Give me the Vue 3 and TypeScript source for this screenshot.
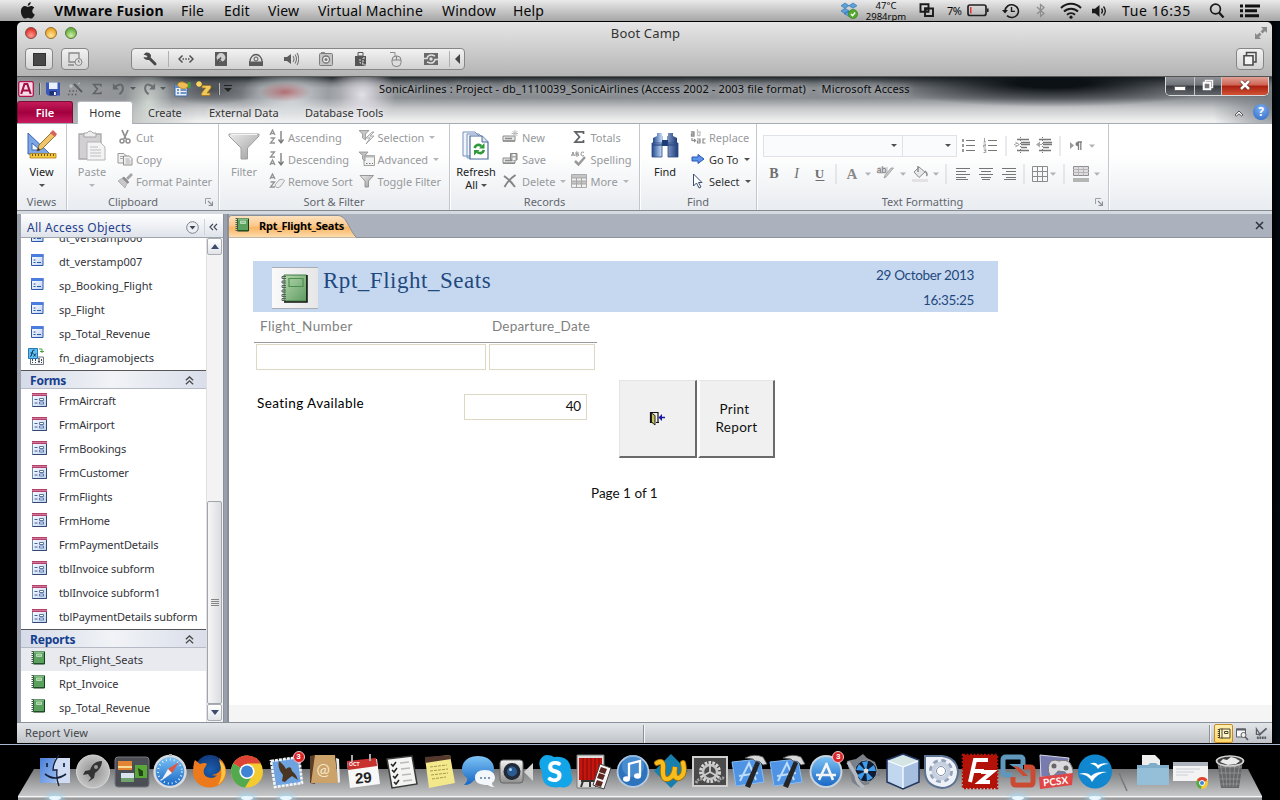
<script setup lang="ts">
interface Cell { icon: string; w: number; text?: string }
interface Entry { name: string; icon: string; active?: boolean }

const menus: string[] = ['File', 'Edit', 'View', 'Virtual Machine', 'Window', 'Help']
const devices: string[] = ['wrench', 'net', 'disk', 'cd', 'sound', 'camera', 'usb', 'mouse', 'share']
const tabs: string[] = ['Home', 'Create', 'External Data', 'Database Tools']

const functions: Entry[] = [
  { name: 'dt_verstamp006', icon: 'proc' },
  { name: 'dt_verstamp007', icon: 'proc' },
  { name: 'sp_Booking_Flight', icon: 'proc' },
  { name: 'sp_Flight', icon: 'proc' },
  { name: 'sp_Total_Revenue', icon: 'proc' },
  { name: 'fn_diagramobjects', icon: 'fn' },
]
const forms: Entry[] = [
  'FrmAircraft', 'FrmAirport', 'FrmBookings', 'FrmCustomer', 'FrmFlights', 'FrmHome',
  'FrmPaymentDetails', 'tblInvoice subform', 'tblInvoice subform1', 'tblPaymentDetails subform',
].map((name) => ({ name, icon: 'form' }))
const reports: Entry[] = [
  { name: 'Rpt_Flight_Seats', icon: 'book', active: true },
  { name: 'Rpt_Invoice', icon: 'book' },
  { name: 'sp_Total_Revenue', icon: 'book' },
]

const listCells: Cell[] = [
  { icon: 'bullets', w: 21 }, { icon: 'numbers', w: 23 }, { icon: 'sep', w: 9 },
  { icon: 'indent', w: 23 }, { icon: 'outdent', w: 22 }, { icon: 'sep', w: 9 },
  { icon: 'pilcrow', w: 24 }, { icon: 'tri', w: 8 },
]
const formatCells: Cell[] = [
  { icon: 'bold', w: 22, text: 'B' }, { icon: 'italic', w: 23, text: 'I' }, { icon: 'under', w: 23, text: 'U' }, { icon: 'sep', w: 10 },
  { icon: 'fontcolor', w: 22, text: 'A' }, { icon: 'tri', w: 9 }, { icon: 'highlight', w: 27, text: 'ab' }, { icon: 'tri', w: 7 },
  { icon: 'bucket', w: 27 }, { icon: 'tri', w: 6 }, { icon: 'sep', w: 14 },
  { icon: 'left', w: 20 }, { icon: 'center', w: 26 }, { icon: 'right', w: 20 }, { icon: 'sep', w: 10 },
  { icon: 'grid', w: 22 }, { icon: 'tri', w: 4 }, { icon: 'sep', w: 18 },
  { icon: 'altfill', w: 16 }, { icon: 'tri', w: 16 },
]

const dockApps: string[] = [
  'finder', 'rocket', 'mission', 'safari', 'firefox', 'chrome', 'mail', 'contacts', 'calendar',
  'reminders', 'stickies', 'messages', 'facetime', 'skype', 'booth', 'itunes', 'wdock', 'prefs',
  'xcode', 'xcode', 'appstore', 'fan', 'cube', 'gearapp', 'filezilla', 'vmware', 'pcsx', 'gulls',
]
const lettering: Record<string, string> = { contacts: '@', calendar: '29', skype: 'S', pcsx: 'PCSX' }
const dockRight: string[] = ['folder', 'minwin', 'trash']
const running: string[] = ['finder', 'chrome', 'mail', 'vmware', 'gulls']
</script>

<template>
  <div class="desktop">
    <svg class="defs" width="0" height="0">
      <defs>
        <linearGradient id="gBlue" x1="0" y1="0" x2="0" y2="1"><stop offset="0" stop-color="#7ec4f5" /><stop offset="1" stop-color="#1565c4" /></linearGradient>
        <linearGradient id="gGrey" x1="0" y1="0" x2="0" y2="1"><stop offset="0" stop-color="#f4f4f4" /><stop offset="1" stop-color="#8f8f8f" /></linearGradient>
        <linearGradient id="gSoft" x1="0" y1="0" x2="1" y2="1"><stop offset="0" stop-color="#ececec" /><stop offset="1" stop-color="#9a9a9a" /></linearGradient>
        <linearGradient id="gGreen" x1="0" y1="0" x2="1" y2="1"><stop offset="0" stop-color="#b4d8ac" /><stop offset="1" stop-color="#5f9a62" /></linearGradient>
        <linearGradient id="gNavy" x1="0" y1="0" x2="1" y2="0"><stop offset="0" stop-color="#23488c" /><stop offset=".35" stop-color="#b9d0f2" /><stop offset="1" stop-color="#1d3b78" /></linearGradient>
        <linearGradient id="gFinder" x1="0" y1="0" x2="1" y2="1"><stop offset="0" stop-color="#4a7fd8" /><stop offset="1" stop-color="#9cbdf0" /></linearGradient>
        <linearGradient id="gPaper" x1="0" y1="0" x2="1" y2="1"><stop offset="0" stop-color="#ffffff" /><stop offset="1" stop-color="#bdd3f2" /></linearGradient>
        <radialGradient id="gFox"><stop offset="0" stop-color="#1c5fae" /><stop offset="1" stop-color="#123a7c" /></radialGradient>
        <radialGradient id="gMetal"><stop offset="0" stop-color="#8f8f8f" /><stop offset="1" stop-color="#c4c4c4" /></radialGradient>
      </defs>

      <!-- menu bar -->
      <symbol id="apple" viewBox="0 0 16 17"><path d="M10.800 0c.2 1.800-1.300 3.700-3.100 3.800C7.500 2 9.200.2 10.800 0zM7.900 4.900c.8 0 1.700-.9 3.100-.9 1.300 0 2.600.6 3.300 1.700-3 1.700-2.400 5.800.5 6.900-.8 2-2.200 4-3.600 4-1.300 0-1.700-.8-3.200-.8s-2 .8-3.200.8C3.200 16.600.9 12.900.9 9.500c0-3.400 2.100-5.400 4.100-5.400 1.300 0 2.200.8 2.900.8z" fill="#1a1a1a" /></symbol>
      <symbol id="dropbox" viewBox="0 0 18 17"><path d="M5 1l4 2.700-4 2.600L1 3.700zM13 1l4 2.700-4 2.600-4-2.600zM5 6.300L9 9l-4 2.600L1 9zM9 9l4 2.600-4 3-5-3z" fill="#5aa2dc" stroke="#2c6ca8" stroke-width=".6" /><circle cx="13" cy="12" r="4.600" fill="#54a82a" stroke="#2f7d17" stroke-width=".6" /><path d="M11 12l1.500 1.600L15.200 10.500" fill="none" stroke="#fff" stroke-width="1.400" /></symbol>
      <symbol id="fusion" viewBox="0 0 16 15"><path d="M1.500 1.200h8v7.500h-8zM6 5.500h8v7.500H6z" fill="none" stroke="#1a1a1a" stroke-width="1.900" /><path d="M5 4.500h5L7.500 8z" fill="#1a1a1a" /></symbol>
      <symbol id="battery" viewBox="0 0 22 13"><rect x="1" y="1" width="18" height="10.500" rx="2" fill="none" stroke="#222" stroke-width="1.700" /><path d="M20 4.500h1.600v3.600H20z" fill="#222" /><path d="M3 3h1.500v6.500H3z" fill="#e2353a" /></symbol>
      <symbol id="history" viewBox="0 0 18 16"><path d="M3 8a6.700 6.400 0 1 1 2 4.700" fill="none" stroke="#1a1a1a" stroke-width="1.600" /><path d="M0 7h6L3 10.500z" fill="#1a1a1a" /><path d="M9.500 4v4.400h3.400" fill="none" stroke="#1a1a1a" stroke-width="1.400" /></symbol>
      <symbol id="blue" viewBox="0 0 9 15"><path d="M1 4l7 6.500-3.500 3V1.500L8 4.500 1 11" fill="none" stroke="#8c8c8c" stroke-width="1.200" /></symbol>
      <symbol id="wifi" viewBox="0 0 22 17"><path d="M1 6a14 14 0 0 1 20 0M4 9.500a10 10 0 0 1 14 0M7 12.700a6 6 0 0 1 8 0" fill="none" stroke="#1a1a1a" stroke-width="2" /><circle cx="11" cy="15.200" r="1.600" fill="#1a1a1a" /></symbol>
      <symbol id="vol" viewBox="0 0 16 12"><path d="M0 3.800h3L7.500 0v12L3 8.200H0z" fill="#1a1a1a" /><path d="M9.500 3.500q2 2.500 0 5M11.500 1.500q3.600 4.500 0 9" fill="none" stroke="#1a1a1a" stroke-width="1.300" /></symbol>
      <symbol id="search" viewBox="0 0 16 15"><circle cx="6.500" cy="6" r="4.900" fill="none" stroke="#1a1a1a" stroke-width="1.700" /><path d="M10 9.500l4.500 5" stroke="#1a1a1a" stroke-width="2.300" /></symbol>
      <symbol id="notes" viewBox="0 0 22 14"><path d="M1 .5h3v3H1zM1 5.300h3v3H1zM1 10.200h3v3H1zM6 .5h15v3H6zM6 5.300h12v3H6zM6 10.200h14v3H6z" fill="#111" /></symbol>

      <!-- virtual machine toolbar -->
      <symbol id="wrench" viewBox="0 0 16 16"><path d="M1.500 3.500L4 1.500q4-.5 5 3l-.3 2 5.500 5.500q1 2-1.500 2.500L7 9Q2.500 9.500 1.500 6l3 .5 1-1.500z" fill="#484848" /></symbol>
      <symbol id="net" viewBox="0 0 16 16"><path d="M4.500 4.500L1 8l3.500 3.500M11.500 4.500L15 8l-3.500 3.500" fill="none" stroke="#505050" stroke-width="1.500" /><path d="M4.500 7.300H6v1.500H4.500zM7.300 7.300h1.500v1.500H7.300zM10 7.300h1.500v1.500H10z" fill="#505050" /></symbol>
      <symbol id="disk" viewBox="0 0 16 16"><path d="M2 1h12v14H2z" fill="#5a5a5a" /><circle cx="8" cy="6.500" r="4.400" fill="#d0d0d0" /><path d="M4 12.500l4-6M5 8l4 3" stroke="#505050" stroke-width="1.400" /></symbol>
      <symbol id="cd" viewBox="0 0 16 16"><path d="M1 10h14v5H1z" fill="#5a5a5a" /><path d="M2 10.500a6 7 0 1 1 12 0" fill="#ddd" stroke="#5a5a5a" stroke-width="1.300" /><circle cx="8" cy="8" r="2" fill="none" stroke="#5a5a5a" /></symbol>
      <symbol id="sound" viewBox="0 0 16 16"><path d="M1 6h3l4-3v10l-4-3H1z" fill="#5c5c5c" /><path d="M10 5q2 3 0 6M12 3.500q3 4.500 0 9M14 2q3.500 6 0 12" fill="none" stroke="#777" stroke-width="1.100" /></symbol>
      <symbol id="camera" viewBox="0 0 16 16"><rect x="1.500" y="2.500" width="13" height="12" rx="1" fill="#c4c4c4" stroke="#7d7d7d" /><circle cx="8" cy="8.500" r="3.500" fill="#eee" stroke="#777" stroke-width="1.300" /><circle cx="8" cy="8.500" r="1.500" fill="#777" /><path d="M3 1h4v1H3z" fill="#888" /></symbol>
      <symbol id="usb" viewBox="0 0 16 16"><path d="M5 1.500h5V5H5z" fill="none" stroke="#555" /><path d="M2 5h11v10H2z" fill="#555" /><path d="M7 8v4h3M10 7h4v7h-4z" fill="none" stroke="#ddd" stroke-dasharray="2 1" /></symbol>
      <symbol id="mouse" viewBox="0 0 16 16"><path d="M2 1.500h5v4" fill="none" stroke="#8c8c8c" /><rect x="4" y="5" width="9" height="10.500" rx="4" fill="#ddd" stroke="#858585" /><path d="M4 9h9M8.500 5v4" stroke="#858585" /></symbol>
      <symbol id="share" viewBox="0 0 16 16"><path d="M1 2h14v12H1z" fill="#6a6a6a" /><path d="M1 7.500h3q1-4 5-3.500l3 1M15 8.500h-3q-1 4-5 3.500l-3-1" fill="none" stroke="#ddd" stroke-width="1.600" /><circle cx="8" cy="8" r="1.700" fill="#ddd" /></symbol>

      <!-- quick access -->
      <symbol id="acc" viewBox="0 0 16 16"><rect x=".7" y=".7" width="14.600" height="14.600" rx="1.500" fill="#f8dce6" stroke="#b0124e" stroke-width="1.300" /><path d="M3.200 13L6.500 3h2.800l3.400 10M4.800 9.500h6.400" fill="none" stroke="#a50f47" stroke-width="2.100" /></symbol>
      <symbol id="floppy" viewBox="0 0 16 16"><path d="M1 1.500h14v13H3l-2-2z" fill="#3c58b8" /><path d="M4 1.500h8.500V8H4z" fill="#e8f0fc" /><path d="M4.500 10h7v4.500h-7z" fill="#1f2f74" /><path d="M9 11h1.800v3H9z" fill="#fff" /></symbol>
      <symbol id="wand" viewBox="0 0 16 16"><path d="M7 3l8 8" stroke="#595c5f" stroke-width="2" /><path d="M2 10h8M1 13.500h9" stroke="#595c5f" stroke-width="1.500" stroke-dasharray="1.500 2" /><path d="M4 3v4M2 5h4M11 3l2-1" stroke="#c4c6c8" /></symbol>
      <symbol id="sigma" viewBox="0 0 16 16"><path d="M12.500 5V2.800H4L8.500 8 4 13.200h8.500V11" fill="none" stroke="#5f6265" stroke-width="1.700" /></symbol>
      <symbol id="undo" viewBox="0 0 16 16"><path d="M4 5q8-5 8.500 2 0 4-4 7" fill="none" stroke="#64686b" stroke-width="2.200" /><path d="M1 1.500v7h7z" fill="#64686b" /></symbol>
      <symbol id="redo" viewBox="0 0 16 16"><path d="M12 5Q4 0 3.500 7q0 4 4 7" fill="none" stroke="#6c7073" stroke-width="2.200" /><path d="M15 1.500v7H8z" fill="#6c7073" /></symbol>
      <symbol id="props" viewBox="0 0 17 16"><path d="M1 4h12v11H1z" fill="#e9f0fa" stroke="#3d6ea8" /><path d="M1 4h12v3H1z" fill="#5b90d8" /><path d="M3 9h2M6.500 9H12M3 12h2M6.500 12H12" stroke="#4a78b0" stroke-width="1.400" /><path d="M3 4q2-4 6-3l5 2v3L10 8 6 7z" fill="#f0bd55" stroke="#a87620" stroke-width=".7" /><path d="M14 1h2.500v6H14z" fill="#3ea13c" /></symbol>
      <symbol id="script" viewBox="0 0 16 16"><path d="M6 4.500h8q2 1 .5 3L11 12h3q1 1.500-1 2.500H6.500q-2-.5-.5-3L9.500 7H6z" fill="#efc95a" stroke="#a8741a" stroke-width=".8" /><path d="M3 0v6M0 3h6M1 1l4 4M5 1L1 5" stroke="#ffd75c" stroke-width="1.300" /></symbol>

      <!-- ribbon -->
      <symbol id="view" viewBox="0 0 32 32"><path d="M2 3v21h22z" fill="#7ea6e2" stroke="#3a67b8" /><path d="M6 13v7h8z" fill="#f4f8ff" stroke="#3a67b8" /><path d="M11 21l2-6L26 2l4 3-14 14z" fill="#f0c468" stroke="#7c5a22" stroke-width=".8" /><path d="M24 3l3-3 4 4-2 3z" fill="#d6645a" /><path d="M11 21l1.500-3.500L14 20z" fill="#333" /><path d="M4 23.500h26v4.500H4z" fill="#f4c838" stroke="#a9821d" stroke-width=".8" /><path d="M6 25h23" stroke="#6e5210" stroke-width="2" stroke-dasharray="1 2" /></symbol>
      <symbol id="paste" viewBox="0 0 32 32"><path d="M3 4h22v25H3z" fill="#d2d0d2" stroke="#aaa8aa" stroke-width="1.300" /><path d="M8 7V3h3q3-4 6 0h3v4z" fill="#eee" stroke="#a5a5a5" /><path d="M11 12h13l5 5v13H11z" fill="#f3f3f4" stroke="#b5b5b5" /><path d="M14 17h8M14 20h11M14 23h11M14 26h11" stroke="#bdbdc0" /></symbol>
      <symbol id="funnelbig" viewBox="0 0 32 32"><path d="M1 4h30v2L19.500 18v11H13V18L1 6z" fill="url(#gSoft)" stroke="#a0a0a0" /><path d="M3 4.500h26" stroke="#f4f4f4" /></symbol>
      <symbol id="refresh" viewBox="0 0 32 32"><path d="M3 2h12l4 4v20H3zM7 4h12l4 4v20H7z" fill="#f2f6fc" stroke="#7390ba" /><path d="M10 6h12l6 6v17H10z" fill="#fff" stroke="#4a6a9c" stroke-width="1.200" /><path d="M22 6v6h6" fill="#dbe6f5" stroke="#4a6a9c" /><path d="M14.500 18q2-5 7-2M24 20q-2 5-7 2" fill="none" stroke="#2f9a3c" stroke-width="2.600" /><path d="M24.500 13v5.500H19zM14 25.500V20h5.500z" fill="#2f9a3c" /></symbol>
      <symbol id="binoc" viewBox="0 0 32 32"><path d="M8 3h5v3h1v8H4V8l4-2zM19 3h5v3l4 2v6H18V6h1z" fill="url(#gNavy)" /><path d="M13 10h6v6h-6z" fill="#1e3b75" /><path d="M3 15h10v12H3zM19 15h10v12H19zM3 13h10v2H3zM19 13h10v2H19z" fill="url(#gNavy)" stroke="#2b4a86" stroke-width=".8" /></symbol>
      <symbol id="cut" viewBox="0 0 16 16"><path d="M5 1l4 9M11 1L7 10" stroke="#8f8f8f" stroke-width="1.800" /><circle cx="5" cy="12" r="2" fill="none" stroke="#8f8f8f" stroke-width="1.500" /><circle cx="11" cy="12" r="2" fill="none" stroke="#8f8f8f" stroke-width="1.500" /></symbol>
      <symbol id="copy" viewBox="0 0 16 16"><path d="M1 2.500h6l2 2V12H1z" fill="#f2f2f2" stroke="#999" /><path d="M6.500 5h6l2.500 2.500V14H6.500z" fill="#f2f2f2" stroke="#8e8e8e" /><path d="M8.500 8h4M8.500 10h5M8.500 12h5M3 5.500h3M3 7.500h3" stroke="#aaa" /></symbol>
      <symbol id="brush" viewBox="0 0 16 16"><path d="M1 8l6-4 4 4-3 7z" fill="#c9c7c9" stroke="#aaa" stroke-width=".8" /><path d="M6 4.500l5.500 5.500" stroke="#8a8a8a" stroke-width="2.200" /><path d="M10 6l5-5" stroke="#a5a5a5" stroke-width="2.800" /></symbol>
      <symbol id="asc" viewBox="0 0 16 16"><path d="M1 6l2.500-5L6 6M2 4.500h3M1.500 9h4L1.500 14h4.500" fill="none" stroke="#929292" stroke-width="1.300" /><path d="M12 2v11M9.500 10.500L12 14l2.500-3.500" fill="none" stroke="#777" stroke-width="1.300" /></symbol>
      <symbol id="desc" viewBox="0 0 16 16"><path d="M1.500 1h4L1.500 6h4.500M1 14l2.500-5L6 14M2 12.500h3" fill="none" stroke="#929292" stroke-width="1.300" /><path d="M12 2v11M9.500 10.500L12 14l2.500-3.500" fill="none" stroke="#777" stroke-width="1.300" /></symbol>
      <symbol id="unsort" viewBox="0 0 16 16"><path d="M1 6l2.500-5L6 6M2 4.500h3M1.500 9h4L1.500 14h4.500" fill="none" stroke="#929292" stroke-width="1.300" /><path d="M6 12l4-5q4-2 5.500 1L11 14q-4 2-5-2z" fill="#eee" stroke="#aaa" /></symbol>
      <symbol id="selfun" viewBox="0 0 16 16"><path d="M0 1.500h10L6.500 5v6l-3-2V5z" fill="#c6c6c6" stroke="#909090" stroke-width=".8" /><path d="M13 3L7 9h4l-4 6 8-8h-4l4-4z" fill="#e8e8e8" stroke="#a0a0a0" stroke-width=".9" /></symbol>
      <symbol id="advfun" viewBox="0 0 16 16"><path d="M5 4.500h10.500v10H5z" fill="#f3f3f3" stroke="#a0a0a0" /><path d="M5 4.500h10.500v2H5z" fill="#bbb" /><path d="M7 12.500h7" stroke="#777" stroke-dasharray="1.500 1.500" /><path d="M0 1h9L6 4.500V10L3.500 8V4.500z" fill="#c0c0c0" stroke="#909090" stroke-width=".8" /></symbol>
      <symbol id="funnel" viewBox="0 0 16 16"><path d="M1 2.500h13.500L9.500 8v6H6V8z" fill="url(#gSoft)" stroke="#8e8e8e" stroke-width=".9" /></symbol>
      <symbol id="new" viewBox="0 0 16 16"><path d="M1 7h12v5H1z" fill="#e4e4e4" stroke="#8d8d8d" /><path d="M3 9.500h7M1 12h12" stroke="#8d8d8d" stroke-width="1.300" /><path d="M13 1v7M9.500 4.500h6.500M10.500 2l5 5M15.500 2l-5 5" stroke="#bbb" /></symbol>
      <symbol id="save" viewBox="0 0 16 16"><path d="M1 7h12v5H1z" fill="#e4e4e4" stroke="#8d8d8d" /><path d="M3 9.500h7M1 12.300h12" stroke="#8d8d8d" stroke-width="1.300" /><path d="M8.500 2.500H15V9H8.500z" fill="#aaa" stroke="#858585" /><path d="M10.500 3h3v2h-3zM10.500 6.500h3V9h-3z" fill="#f4f4f4" /></symbol>
      <symbol id="del" viewBox="0 0 16 16"><path d="M2 3q6 4 11 11M13.500 2Q6 7 2.500 14" fill="none" stroke="#848484" stroke-width="1.900" /></symbol>
      <symbol id="spell" viewBox="0 0 16 16"><path d="M.5 5L2 1l1.500 4M1 4h2M5 1v4M5 1h1.500q2 1 0 2H5h2q1.500 1 0 2H5M13 1.500q-3-1.500-3 1.500t3 1.500" fill="none" stroke="#8a8a8a" stroke-width=".9" /><path d="M4 10l3.500 3.500L14 6" fill="none" stroke="#999" stroke-width="2.500" /></symbol>
      <symbol id="more" viewBox="0 0 16 16"><path d="M.5 1.500h15v13H.5z" fill="#f1f1f1" stroke="#aaa" /><path d="M1 2h14v3H1zM1 8h14v3H1z" fill="#c5c5c5" /><path d="M.5 5h15M.5 8h15M.5 11h15M5.500 5v9M10.500 5v9" stroke="#a5a5a5" /></symbol>
      <symbol id="replace" viewBox="0 0 16 16"><path d="M1 3h3v4H1.500V5H4" fill="none" stroke="#8c8c8c" stroke-width="1.300" /><path d="M7.500 0v6.500H10V3H7.500" fill="none" stroke="#c4c4c4" stroke-width="1.300" /><path d="M2 9v2.500h3M4 10l1.500 1.500L4 13M7 10h3v4H7.500v-2H10M15.500 10H13v4h2.500" fill="none" stroke="#8c8c8c" stroke-width="1.200" /></symbol>
      <symbol id="goto" viewBox="0 0 16 16"><path d="M2 6h6V3.500L14 8l-6 4.500V10H2z" fill="#5e93ec" stroke="#2756b4" /></symbol>
      <symbol id="pointer" viewBox="0 0 16 16"><path d="M3.500 1v12l3-3 2.500 5 2-1-2.500-4.500H12z" fill="#fff" stroke="#3b4f74" /></symbol>
      <symbol id="launch" viewBox="0 0 8 8"><path d="M.5 6V.5H6" fill="none" stroke="#9aa0a8" /><path d="M3 3l4 4M7.500 3.500v4h-4" fill="none" stroke="#8b9098" stroke-width="1.200" /></symbol>

      <!-- text formatting -->
      <symbol id="sep" viewBox="0 0 16 20"><path d="M8 0v20" stroke="#d2d5da" /></symbol>
      <symbol id="tri" viewBox="0 0 16 20"><path d="M5 8.500h6L8 11.800z" fill="#b0b3b8" /></symbol>
      <symbol id="under" viewBox="0 0 16 20"><path d="M3.500 16.500h9" stroke="#6f6f6f" /></symbol>
      <symbol id="highlight" viewBox="0 0 16 20"><path d="M0 3h10v7H0z" fill="#dcdadc" /><path d="M15.500 4L8 13l-2 1 .8-2.500L13 4z" fill="#ccc" stroke="#999" stroke-width=".8" /></symbol>
      <symbol id="bucket" viewBox="0 0 16 20"><path d="M7 3l6 5-6 5.500-5-5.500z" fill="#e8e8e8" stroke="#8e8e8e" /><path d="M6 2v6M13 7q3 3 1.500 5" stroke="#8e8e8e" fill="none" stroke-width="1.500" /><path d="M0 15h16v3H0z" fill="#e4e0e4" /></symbol>
      <symbol id="left" viewBox="0 0 16 20"><path d="M1 4.500h14M1 7.500h10M1 10.500h14M1 13.500h10M1 15.500h12" stroke="#757575" /></symbol>
      <symbol id="center" viewBox="0 0 16 20"><path d="M1 4.500h14M3 7.500h10M1 10.500h14M3 13.500h10M4 15.500h8" stroke="#757575" /></symbol>
      <symbol id="right" viewBox="0 0 16 20"><path d="M1 4.500h14M5 7.500h10M1 10.500h14M5 13.500h10M3 15.500h12" stroke="#757575" /></symbol>
      <symbol id="grid" viewBox="0 0 16 20"><path d="M.5 2.500h15v15H.5zM5.500 2.500v15M10.500 2.500v15M.5 7.500h15M.5 12.500h15" fill="none" stroke="#8b8b8b" /></symbol>
      <symbol id="altfill" viewBox="0 0 16 20"><path d="M.5 2.500h15v9H.5z" fill="#e0dde2" stroke="#8d8d8d" /><path d="M5.500 2.500v9M10.500 2.500v9M0 5.500h16M0 8.500h16" stroke="#b5b5b5" /><path d="M0 14h16v4H0z" fill="#b5b5b5" /></symbol>
      <symbol id="bullets" viewBox="0 0 16 20"><path d="M6 4.500h9M6 9.500h9M6 14.500h9" stroke="#777" /><path d="M2 3h2v3H2zM2 8h2v3H2zM2 13h2v3H2z" fill="#999" /></symbol>
      <symbol id="numbers" viewBox="0 0 16 20"><path d="M6 4.500h9M6 9.500h9M6 14.500h9" stroke="#777" /><path d="M2.500 2v4M1.500 6H4M1.500 8h2v1.500h-2V11H4M1.500 13h2.300v3.500H1.500M2 14.700h2" fill="none" stroke="#999" stroke-width=".9" /></symbol>
      <symbol id="indent" viewBox="0 0 16 20"><path d="M3 3.500h12M7 6.500h9M7 8.500h9M7 11.500h6M3 14.500h12" stroke="#777" stroke-width="1.300" /><path d="M6 8.500L1.500 5.500v6zM0 8h4v1H0z" fill="#aaa" /><path d="M6.500 1v16" stroke="#777" stroke-dasharray="1 2" /></symbol>
      <symbol id="outdent" viewBox="0 0 16 20"><path d="M3 3.500h12M7 6.500h9M7 8.500h9M7 11.500h6M3 14.500h12" stroke="#777" stroke-width="1.300" /><path d="M0 8.500L4 5.500v6zM3 8h3v1H3z" fill="#aaa" /><path d="M6.500 1v16" stroke="#777" stroke-dasharray="1 2" /></symbol>
      <symbol id="pilcrow" viewBox="0 0 16 20"><path d="M2 6l4 3.500L2 13z" fill="#999" /><path d="M14 6H9.500a2 2 0 0 0 0 4.200h1V6" fill="#808080" /><path d="M14 6H9.500M10.500 6v8M12.800 6v8" fill="none" stroke="#808080" stroke-width="1.300" /></symbol>

      <!-- navigation -->
      <symbol id="proc" viewBox="0 0 16 16"><path d="M.5 2.500h11.500v11H.5z" fill="url(#gPaper)" stroke="#2b57ac" /><path d="M0 2h12.500v3H0z" fill="#4a7ddd" /><path d="M2.500 8h2M2.500 10.500h2M6 10.500h4" stroke="#2b57ac" stroke-width="1.200" /></symbol>
      <symbol id="fn" viewBox="0 0 17 17"><path d="M2.500 9h13v7.500h-13z" fill="#f8f8f8" stroke="#6f7680" /><path d="M4.500 11v4M7.500 11v4M10.500 10.500h1v4h-1zM13.500 11v4" fill="none" stroke="#3c4652" stroke-dasharray="2 1" /><path d="M.5.500h9v10h-9z" fill="#5fc1f2" stroke="#2477b8" /><path d="M6.500 2.200Q4.500 1 4 5t-2 3.500M2.500 5H5M5.500 5.500l2 2.800M8 5.500l-2.500 3" fill="none" stroke="#173652" /><path d="M11 1h3v4M12 3.500h4" fill="none" stroke="#4aa04a" /></symbol>
      <symbol id="form" viewBox="0 0 16 16"><path d="M.5 1.500h14v13H.5z" fill="url(#gPaper)" stroke="#7288b0" /><path d="M14.500 2v12.500H.5" fill="none" stroke="#33486e" /><path d="M0 1h15v3H0z" fill="#b8406c" /><path d="M0 2.500h15" stroke="#cf7595" /><path d="M2.500 7.500h3M2.500 11h3" stroke="#47628f" /><path d="M7.500 6.500h4v2h-4zM7.500 10h4v2h-4z" fill="#fff" stroke="#5a76a4" /></symbol>
      <symbol id="book" viewBox="0 0 16 16"><path d="M2.500 1.500h11v12h-11z" fill="#5aa05e" stroke="#2c6232" /><path d="M3 2h10.500" stroke="#a8d4a8" /><path d="M5.500 4h5v2.500h-5z" fill="#8cc48c" stroke="#d4ecd4" stroke-width=".7" /><path d="M13.500 2v12h-11" fill="none" stroke="#163d1c" /><path d="M1.500 1v13" stroke="#4c574d" stroke-width="2" stroke-dasharray="1 1" /></symbol>
      <symbol id="logo" viewBox="0 0 28 30"><path d="M3 2h22.500v26H3z" fill="url(#gGreen)" stroke="#3f7c45" /><path d="M26 2v27H3" fill="none" stroke="#0a130b" stroke-width="1.500" /><path d="M8 5.500h14v8H8z" fill="none" stroke="#4d8f50" stroke-width="1.200" /><path d="M5 3.500H1v2h4M5 8H1v2h4M5 12.500H1v2h4M5 17H1v2h4M5 21.500H1v2h4M5 25.500H1v2h4" fill="none" stroke="#55605a" /></symbol>
      <symbol id="up2" viewBox="0 0 8 8"><path d="M.8 3.800L4 .8l3.200 3M.8 7.300L4 4.300l3.200 3" fill="none" stroke="#4a4a4a" stroke-width="1.200" /></symbol>
      <symbol id="door" viewBox="0 0 16 16"><path d="M1 2.500h8v10M1.500 2v10.500H4" fill="none" stroke="#111" stroke-width="1.200" /><path d="M2.500 3l3.500 2.500v9.500l-3.500-3z" fill="#c9c35a" stroke="#111" stroke-width=".9" /><path d="M10 12.500H7" stroke="#111" /><path d="M9.500 7.500L13 4v2.700h3v1.600h-3V11z" fill="#1a16a8" /></symbol>
      <symbol id="zoomv" viewBox="0 0 14 14"><path d="M1.500 2h9v8h-9z" fill="#f8f8f8" stroke="#5a5e66" /><path d="M1 1.500h10v2H1z" fill="#5a5e66" /><circle cx="8.500" cy="8" r="2.500" fill="#f2f2f2" stroke="#5a5e66" /><path d="M10.300 10l2.700 3" stroke="#5a5e66" stroke-width="1.600" /></symbol>
      <symbol id="design" viewBox="0 0 14 14"><path d="M1.500 2v6h4z" fill="#d8dade" stroke="#5a5e66" stroke-width="1.300" /><path d="M4 9l8.500-7.500" stroke="#5a5e66" stroke-width="2" /><path d="M2 11.500h10" stroke="#5a5e66" stroke-width="2.600" stroke-dasharray="2 .7" /></symbol>
      <symbol id="repv" viewBox="0 0 14 14"><path d="M2.500 2h10.500v9H2.500z" fill="#fdf3c4" stroke="#4c4630" /><path d="M5 1.500v10M7.500 4.500h3.500v2H7.500z" fill="none" stroke="#4c4630" /><path d="M1.500 2v9" stroke="#4c4630" stroke-width="1.500" stroke-dasharray="1 1" /></symbol>

      <!-- dock -->
      <symbol id="finder" viewBox="0 0 38 38"><path d="M4 6h15l-2 12h4l-1 13H4z" fill="url(#gFinder)" /><path d="M19 6h15v25H20l1-13h-4z" fill="#cfdcf3" /><path d="M23 3q-6 8-6 15h4q-1 9 2 16" fill="none" stroke="#15223d" stroke-width="1.300" /><path d="M11 11v4M28 11v4M9 22q10 8 21 0" fill="none" stroke="#15223d" stroke-width="1.700" /></symbol>
      <symbol id="rocket" viewBox="0 0 38 38"><circle cx="19" cy="19.500" r="16.500" fill="url(#gMetal)" stroke="#d9d9d9" /><path d="M28 9q-9 0-12 9l-5 1-2 4 5-1 3 4-3 4 6-4 1-5q7-5 7-12z" fill="#333" /><circle cx="22" cy="15" r="2" fill="#999" /></symbol>
      <symbol id="mission" viewBox="0 0 38 38"><rect x="2" y="5" width="34" height="30" rx="3" fill="#4b4e55" stroke="#74777e" /><path d="M5 9h14v9H5z" fill="#e18433" /><path d="M5 14h14v2H5z" fill="#f9dc93" /><path d="M22 13h12v13H22z" fill="#58a837" /><path d="M25 16l5 3v5h-4z" fill="#214517" /><path d="M8 21h13v9H8z" fill="#d9e3ef" /><path d="M8 26h13v4H8z" fill="#70a06e" /></symbol>
      <symbol id="safari" viewBox="0 0 38 38"><circle cx="19" cy="19.500" r="15.500" fill="url(#gBlue)" stroke="#d8dbdf" stroke-width="2.400" /><circle cx="19" cy="19.500" r="12" fill="none" stroke="#dff0ff" stroke-dasharray="1 3" stroke-width="2" /><path d="M28 10l-7 11-4-4z" fill="#e3553f" /><path d="M10 29l7-12 4 4z" fill="#f4f4f4" /><path d="M18 2h3v2h-3z" fill="#aaa" /></symbol>
      <symbol id="firefox" viewBox="0 0 38 38"><circle cx="20" cy="18" r="15" fill="url(#gFox)" /><path d="M5 8l5 4q5-2 7 0l-3 5q-2 8 7 9 4 0 6-3-2 1-5 0 9-1 9-9 0-5-2-8 7 5 7 14c0 10-8 15.500-16 15.500C9 35.500 3 28 3 20Q3 12 5 8z" fill="#ec7a1c" /><path d="M29 8q7 5 6.500 13-1 8-8 12 7-9 1.500-25z" fill="#fbc441" /></symbol>
      <symbol id="chrome" viewBox="0 0 38 38"><circle cx="19" cy="19.500" r="16" fill="#f4ca31" /><path d="M19 19.500L5.200 11.500A16 16 0 0 1 33 11.500H19z" fill="#dd4436" /><path d="M19 19.500L5.200 11.500A16 16 0 0 0 17 35.500l8-13z" fill="#52a94e" /><circle cx="19" cy="19.500" r="7.600" fill="#fff" /><circle cx="19" cy="19.500" r="6" fill="#3f84d4" /></symbol>
      <symbol id="mail" viewBox="0 0 38 38"><path d="M4 9l28-4 3 26-27 4z" fill="#6fa3df" stroke="#f4f4f4" stroke-width="2.600" stroke-dasharray="3 1" /><path d="M12 9q5 4 7 8 3-3 5-1l1 3q4 3 6 9l-6-4-4 3-3 3-3-1 1-6q-6-7-4-14z" fill="#4a3522" /></symbol>
      <symbol id="contacts" viewBox="0 0 38 38"><path d="M4 4l5-1v29l-5-1z" fill="#5c3d27" /><path d="M9 3h20l3 28H5z" fill="#cba36a" /><path d="M30 6l3 1 1 23-2 1z" fill="#efefef" /></symbol>
      <symbol id="calendar" viewBox="0 0 38 38"><path d="M3 10l30-3 3 25-30 4z" fill="#f7f7f7" /><path d="M3 9l29-3 1 8-29 4z" fill="#c8322e" /><path d="M8 3v7M26 2v7" stroke="#aaa" stroke-width="2" /></symbol>
      <symbol id="reminders" viewBox="0 0 38 38"><path d="M4 7l25-3 5 28-25 4z" fill="#f4f4f2" stroke="#3a3a3a" stroke-width="1.500" /><path d="M8 12l2 2 3-4M9 18l2 2 3-4M10 24l2 2 3-4M11 30l2 2 3-4" fill="none" stroke="#222" stroke-width="1.500" /><path d="M17 11l9-1M18 17l9-1M19 23l9-1M20 29l9-1" stroke="#b9b9b9" stroke-width="1.600" /></symbol>
      <symbol id="stickies" viewBox="0 0 38 38"><path d="M4 6l25-3 5 28-26 5z" fill="#f3e88c" /><path d="M4 5l25-2 1 4-26 4z" fill="#54382c" /><path d="M9 15l17-2M9 19l18-2M10 23l17-2M11 27l14-2" stroke="#a6994c" stroke-dasharray="3 1" /></symbol>
      <symbol id="messages" viewBox="0 0 38 38"><path d="M18 4c9 0 16 5 16 13s-7 12-15 12q-3 0-5-1-3 5-10 5 4-3 3-7-5-3-5-9C2 9 9 4 18 4z" fill="url(#gBlue)" /><path d="M25 18c6 0 10 3 10 8q0 3-3 5 0 3 3 4-5 0-7-2-13 0-13-7 0-8 10-8z" fill="#f3f6fa" /><path d="M20 26h2M24 26h2M28 26h2" stroke="#7f9ab8" stroke-width="2" /></symbol>
      <symbol id="facetime" viewBox="0 0 38 38"><rect x="2" y="8" width="23" height="23" rx="3" fill="url(#gGrey)" stroke="#666" /><path d="M26 20l9-9v18z" fill="#d5d5d5" /><circle cx="14" cy="19.500" r="8.500" fill="#222a36" /><circle cx="14" cy="19.500" r="5" fill="#2a5b93" /><circle cx="12.500" cy="17.500" r="1.500" fill="#a8d4f2" /></symbol>
      <symbol id="skype" viewBox="0 0 38 38"><path d="M10 3q4 0 7 2 18-2 17 17 2 4 1 7-3 8-12 6-19 3-18-16Q1 14 3 8q3-5 7-5z" fill="#12a5e8" /></symbol>
      <symbol id="booth" viewBox="0 0 38 38"><path d="M2 3h27v33H2z" fill="#ddd" stroke="#777" /><path d="M4 6h23v22H4z" fill="#c4160e" /><path d="M8 6v22M12 6v22M16 6v22M20 6v22M24 6v22" stroke="#7e0a06" /><path d="M6 29h14l1 6M8 29l-2 6M15 29v6" fill="none" stroke="#333" stroke-width="2" /><path d="M25 12l11 4-7 21-11-4z" fill="#f6f6f6" stroke="#444" /><path d="M26 15l6 2-2 5-6-2zM24 21l6 2-2 5-6-2zM22 28l6 2-2 5-6-2z" fill="#5d2721" /></symbol>
      <symbol id="itunes" viewBox="0 0 38 38"><circle cx="19" cy="19.500" r="15.500" fill="#2e74bd" stroke="#b8cbe0" stroke-width="1.800" /><circle cx="19" cy="14" r="11" fill="#5fa4e2" opacity=".5" /><path d="M15 27V12l11-3v15" fill="none" stroke="#fff" stroke-width="2.300" /><ellipse cx="12.500" cy="27" rx="3.500" ry="2.700" fill="#fff" /><ellipse cx="23.500" cy="24" rx="3.500" ry="2.700" fill="#fff" /></symbol>
      <symbol id="wdock" viewBox="0 0 38 38"><path d="M19 2l17 17-17 17L2 19z" fill="#177fae" /><path d="M5 11q7-4 6 6-1 11 5 10 6-2 7-12-2 12 4 11 7-3 4-15" fill="none" stroke="#a06c08" stroke-width="6" stroke-linecap="round" /><path d="M5 11q7-4 6 6-1 11 5 10 6-2 7-12-2 12 4 11 7-3 4-15" fill="none" stroke="#f9bd1b" stroke-width="4.200" stroke-linecap="round" /></symbol>
      <symbol id="prefs" viewBox="0 0 38 38"><path d="M2 5h34v29H2z" fill="#4a4a4a" stroke="#cfcfcf" stroke-width="2" /><circle cx="19" cy="20" r="9" fill="none" stroke="#d4d4d4" stroke-width="4" stroke-dasharray="2.500 1.200" /><circle cx="19" cy="20" r="7" fill="none" stroke="#c4c4c4" stroke-width="2.500" /><path d="M19 20V12M19 20l7 4M19 20l-7 4" stroke="#ccc" stroke-width="1.800" /><path d="M5 31q3-6 7-3M27 30q3-6 7-3" stroke="#a5a5a5" stroke-width="3" fill="none" stroke-dasharray="2 1" /></symbol>
      <symbol id="xcode" viewBox="0 0 38 38"><path d="M2 10l28-3 4 23-28 4z" fill="#4f93e4" stroke="#89bdf4" /><path d="M10 29l9-18 7 17M9 24l19-3" fill="none" stroke="#bcdcfb" stroke-width="2" /><path d="M26 9l4 2-10 25-5-2z" fill="#252525" /><path d="M15 6q9-5 18-1l4 7-4 1q-3-5-8-4l-2-2z" fill="#d8d8d8" stroke="#555" stroke-width=".8" /></symbol>
      <symbol id="appstore" viewBox="0 0 38 38"><circle cx="19" cy="19.500" r="15.500" fill="url(#gBlue)" stroke="#c9d3dd" stroke-width="2" /><path d="M12 28l8-17M19 11l7 17M9 23h20" fill="none" stroke="#f5f5f5" stroke-width="2.600" /></symbol>
      <symbol id="fan" viewBox="0 0 38 38"><path d="M2 9l9-2 7-5 4 4 8 4 5 14-7-1-4 9-10 3-7-5z" fill="#7b7f87" /><circle cx="21" cy="19" r="11" fill="#0e1c36" stroke="#999" /><path d="M21 19l-4-9 6-1zM21 19l8-6 2 6zM21 19l7 7-6 3zM21 19l-5 9-4-5zM21 19l-10-1 3-6z" fill="#3f9dec" /><circle cx="21" cy="19" r="2.400" fill="#dcdcdc" /><path d="M3 10l8 13q1 9 8 12" fill="none" stroke="#b6bac1" stroke-width="3.500" /></symbol>
      <symbol id="cube" viewBox="0 0 38 38"><path d="M19 2l16 6v22l-16 7L3 30V8z" fill="#a6bfe0" stroke="#24365e" stroke-width="1.500" /><path d="M19 3l15 6-15 6L4 9z" fill="#d4e5e4" /><path d="M4 10l15 6v20L4 29z" fill="#c1d6ef" /><path d="M4 9l15 6 15-6M19 15v21" fill="none" stroke="#f1f8ff" stroke-width="1.500" /></symbol>
      <symbol id="gearapp" viewBox="0 0 38 38"><path d="M3 4h17q15 2 16 16-1 15-16 16Q3 34 3 19z" fill="#eef2f8" stroke="#5c7394" stroke-width="2" /><circle cx="19" cy="19" r="10" fill="none" stroke="#93a2b9" stroke-width="4" stroke-dasharray="4.500 3.350" /><circle cx="19" cy="19" r="7.500" fill="none" stroke="#c6d0df" stroke-width="4" /><circle cx="19" cy="19" r="4.500" fill="#fff" stroke="#7f90aa" /></symbol>
      <symbol id="filezilla" viewBox="0 0 38 38"><path d="M2 3h34v33H2z" fill="#b31209" stroke="#b31209" stroke-width="2.500" stroke-dasharray="2 1.500" /><path d="M9 30l5-22h13M12 19h11M20 20h11L19 30h10" fill="none" stroke="#fff" stroke-width="4" /></symbol>
      <symbol id="vmware" viewBox="0 0 38 38"><path d="M13 23H7q-3 0-3-3V8q0-3 3-3h14q3 0 3 3v5" fill="none" stroke="#5f97bd" stroke-width="5" /><path d="M25 15h6q3 0 3 3v12q0 3-3 3H17q-3 0-3-3v-5" fill="none" stroke="#cb4b32" stroke-width="5" /><path d="M10 12h14v5h-6z" fill="#5f97bd" /><path d="M14 14l6 1 9 9h-5z" fill="#cb4b32" /></symbol>
      <symbol id="pcsx" viewBox="0 0 38 38"><path d="M2 3l29 3-3 20-25-1z" fill="#777bb0" stroke="#d5d5e8" /><path d="M13 9q4-2 8 0 7-2 11 2 5 8 2 15-4 0-7-6l-7-1q-4 6-8 5-4-9 1-15z" fill="#d9d9de" stroke="#777" /><circle cx="16" cy="14" r="2.500" fill="#666" /><circle cx="28" cy="16" r="2.500" fill="#666" /><path d="M1 25l34-4-1 12-32 4z" fill="#e04646" /></symbol>
      <symbol id="gulls" viewBox="0 0 38 38"><circle cx="19" cy="19.500" r="17" fill="#1187cf" /><path d="M14 12q5-3 8 1 5-3 11-1-7 0-11 5-3-5-8-5zM3 22q8-3 12 2 6-5 16-4-10 1-15 10Q12 22 3 22z" fill="#fff" /></symbol>
      <symbol id="folder" viewBox="0 0 38 38"><path d="M8 3h13l5 5v9H8z" fill="#eee" /><path d="M3 13h11l2-2h6l2 2h11v20H3z" fill="#7eacc9" /><path d="M3 16h32v17H3z" fill="#95bfd9" /></symbol>
      <symbol id="minwin" viewBox="0 0 38 38"><path d="M1 10h35v19H1z" fill="#f3f3f3" /><path d="M1 10h35v4H1z" fill="#aeb4bd" /><path d="M4 17h24M4 20h18M4 23h12" stroke="#c9ced6" /><circle cx="30" cy="31" r="6" fill="#f4ca31" /><path d="M30 31l-5-3a6 6 0 0 1 10.500 0z" fill="#dd4436" /><path d="M30 31l-5-3a6 6 0 0 0 4 9z" fill="#52a94e" /><circle cx="30" cy="31" r="2.500" fill="#3f84d4" stroke="#fff" /></symbol>
      <symbol id="trash" viewBox="0 0 38 38"><path d="M6 8h26l-4 28H10z" fill="#65676a" /><path d="M9 10l4 25M14 10l2 25M19 10v25M24 10l-2 25M29 10l-4 25M7 15h24M8 21h22M9 27h20M10 32h18" stroke="#a5a5a5" stroke-width=".6" /><ellipse cx="19" cy="9" rx="13.500" ry="5" fill="#3e3e3e" stroke="#d5d5d5" stroke-width="1.700" /><path d="M9 10l3-3 4 1 4-3 4 1 5 3-4 3-8 1z" fill="#ececec" /></symbol>
    </svg>

    <header class="menubar">
      <svg class="apple" width="16" height="17"><use href="#apple" /></svg>
      <b class="appname">VMware Fusion</b>
      <nav class="menus"><span v-for="m in menus" :key="m">{{ m }}</span></nav>
      <div class="tray">
        <svg width="18" height="17"><use href="#dropbox" /></svg>
        <div class="temp"><span>47°C</span><span>2984rpm</span></div>
        <svg class="t-fus" width="16" height="15"><use href="#fusion" /></svg>
        <span class="pct">7%</span>
        <svg class="t-bat" width="22" height="13"><use href="#battery" /></svg>
        <svg class="t-his" width="18" height="16"><use href="#history" /></svg>
        <svg class="t-blu" width="9" height="15"><use href="#blue" /></svg>
        <svg class="t-wif" width="22" height="17"><use href="#wifi" /></svg>
        <svg class="t-vol" width="16" height="12"><use href="#vol" /></svg>
        <span class="clock">Tue 16:35</span>
        <svg class="t-sea" width="16" height="15"><use href="#search" /></svg>
        <svg class="t-not" width="22" height="14"><use href="#notes" /></svg>
      </div>
    </header>

    <main class="vm">
      <section class="machead">
        <div class="macbar">
          <i class="light red" /><i class="light amber" /><i class="light green" />
          <span class="mactitle">Boot Camp</span>
          <svg class="full" width="14" height="14" viewBox="0 0 14 14"><path d="M7 1h6v6L11 5 8.500 7.500 6.500 5.500 9 3zM7 13H1V7l2 2 2.500-2.500 2 2L5 11z" fill="#8a8a8a" /></svg>
        </div>
        <div class="macbuttons">
          <span class="mbtn"><i class="stop" /></span>
          <span class="mbtn snap"><svg width="16" height="16" viewBox="0 0 16 16"><path d="M2 2h10v9H2zM1 14h6" fill="#e4e4e4" stroke="#888" stroke-width="1.300" /><circle cx="11.500" cy="11" r="3.500" fill="#ddd" stroke="#888" /><path d="M11.500 9v2H13" fill="none" stroke="#888" /></svg></span>
          <div class="devices">
            <span v-for="d in devices" :key="d" class="dev" :class="'dev-' + d"><svg width="16" height="16"><use :href="'#' + d" /></svg></span>
            <span class="collapse"><i /></span>
          </div>
          <span class="mbtn last"><svg width="16" height="16" viewBox="0 0 16 16"><path d="M4.500 4V1.500H14V11h-2.500" fill="none" stroke="#4a4a4a" stroke-width="1.500" /><path d="M2 4.700h9V14H2z" fill="#f4f4f4" stroke="#4a4a4a" stroke-width="1.600" /></svg></span>
        </div>
      </section>

      <section class="glass">
        <div class="titlerow">
          <div class="qat">
            <svg width="16" height="16"><use href="#acc" /></svg><i class="bar" />
            <svg class="q1" width="16" height="16"><use href="#floppy" /></svg>
            <svg class="q2" width="16" height="16"><use href="#wand" /></svg>
            <svg class="q3" width="14" height="14"><use href="#sigma" /></svg>
            <svg class="q4" width="14" height="14"><use href="#undo" /></svg><i class="dd dark" />
            <svg class="q5" width="14" height="14"><use href="#redo" /></svg><i class="dd dark" />
            <svg class="q6" width="17" height="16"><use href="#props" /></svg>
            <svg class="q7" width="16" height="16"><use href="#script" /></svg><i class="bar b2" />
            <i class="custom" />
          </div>
          <div class="wintitle">SonicAirlines : Project - db_1110039_SonicAirlines (Access 2002 - 2003 file format)&nbsp; -&nbsp; Microsoft Access</div>
          <div class="winctl">
            <span class="wc min"><i /></span>
            <span class="wc max"><svg width="12" height="12" viewBox="0 0 12 12"><path d="M3.500 3V1.500h7v7H9" fill="none" stroke="#f4f4f4" stroke-width="1.500" /><path d="M1.700 3.700h6.600v6.600H1.700z" fill="#777" stroke="#fff" stroke-width="2" /></svg></span>
            <span class="wc close"><svg width="12" height="10" viewBox="0 0 12 10"><path d="M2 1l8 8M10 1L2 9" stroke="#5b2a24" stroke-width="4" /><path d="M2 1l8 8M10 1L2 9" stroke="#fff" stroke-width="2.500" /></svg></span>
          </div>
        </div>
        <div class="tabrow">
          <span class="filetab">File</span>
          <span v-for="(t, i) in tabs" :key="t" class="tab" :class="'tab' + i">{{ t }}</span>
          <svg class="minrib" width="10" height="8" viewBox="0 0 10 8"><path d="M1 6l4-4 4 4-1.500 1L5 4.800 2.500 7z" fill="#fff" stroke="#555" /></svg>
          <span class="help">?</span>
        </div>
      </section>

      <section class="ribbon">
        <div class="group g-views">
          <div class="gbody"><div class="big"><svg width="32" height="32"><use href="#view" /></svg><span>View</span><i class="dd black" /></div></div>
          <div class="glabel">Views</div>
        </div>
        <div class="group g-clip">
          <div class="gbody">
            <div class="big off"><svg width="32" height="32"><use href="#paste" /></svg><span>Paste</span><i class="dd" /></div>
            <div class="col off">
              <span class="cmd"><svg width="16" height="16"><use href="#cut" /></svg>Cut</span>
              <span class="cmd"><svg width="16" height="16"><use href="#copy" /></svg>Copy</span>
              <span class="cmd fp"><svg width="16" height="16"><use href="#brush" /></svg>Format Painter</span>
            </div>
          </div>
          <div class="glabel">Clipboard<svg class="launch" width="8" height="8"><use href="#launch" /></svg></div>
        </div>
        <div class="group g-sort">
          <div class="gbody">
            <div class="big off"><svg width="32" height="32"><use href="#funnelbig" /></svg><span>Filter</span></div>
            <div class="col off c1">
              <span class="cmd"><svg width="16" height="16"><use href="#asc" /></svg>Ascending</span>
              <span class="cmd"><svg width="16" height="16"><use href="#desc" /></svg>Descending</span>
              <span class="cmd rs"><svg width="16" height="16"><use href="#unsort" /></svg>Remove Sort</span>
            </div>
            <div class="col off c2">
              <span class="cmd"><svg width="16" height="16"><use href="#selfun" /></svg>Selection<i class="dd" /></span>
              <span class="cmd"><svg width="16" height="16"><use href="#advfun" /></svg>Advanced<i class="dd" /></span>
              <span class="cmd"><svg width="16" height="16"><use href="#funnel" /></svg>Toggle Filter</span>
            </div>
          </div>
          <div class="glabel">Sort &amp; Filter</div>
        </div>
        <div class="group g-rec">
          <div class="gbody">
            <div class="big"><svg width="32" height="32"><use href="#refresh" /></svg><span>Refresh</span><span class="l2">All<i class="dd black" /></span></div>
            <div class="col off c4">
              <span class="cmd"><svg width="16" height="16"><use href="#new" /></svg>New</span>
              <span class="cmd"><svg width="16" height="16"><use href="#save" /></svg>Save</span>
              <span class="cmd"><svg width="16" height="16"><use href="#del" /></svg>Delete<i class="dd" /></span>
            </div>
            <div class="col off c3">
              <span class="cmd"><svg width="16" height="16"><use href="#sigma" /></svg>Totals</span>
              <span class="cmd"><svg width="16" height="16"><use href="#spell" /></svg>Spelling</span>
              <span class="cmd"><svg width="16" height="16"><use href="#more" /></svg>More<i class="dd" /></span>
            </div>
          </div>
          <div class="glabel">Records</div>
        </div>
        <div class="group g-find">
          <div class="gbody">
            <div class="big"><svg width="32" height="32"><use href="#binoc" /></svg><span>Find</span></div>
            <div class="col">
              <span class="cmd off"><svg width="16" height="16"><use href="#replace" /></svg>Replace</span>
              <span class="cmd"><svg width="16" height="16"><use href="#goto" /></svg>Go To<i class="dd black" /></span>
              <span class="cmd"><svg width="16" height="16"><use href="#pointer" /></svg>Select<i class="dd black" /></span>
            </div>
          </div>
          <div class="glabel">Find</div>
        </div>
        <div class="group g-text">
          <div class="gbody tf">
            <div class="tfrow">
              <span class="combo name"><i class="dd black" /></span><span class="combo size"><i class="dd black" /></span>
              <span v-for="(c, i) in listCells" :key="i" class="cell" :style="{ width: c.w + 'px' }"><svg width="16" height="20"><use :href="'#' + c.icon" /></svg></span>
            </div>
            <div class="tfrow second">
              <span v-for="(c, i) in formatCells" :key="i" class="cell" :class="'cell-' + c.icon" :style="{ width: c.w + 'px' }"><svg width="16" height="20"><use :href="'#' + c.icon" /></svg><span v-if="c.text" class="glyph">{{ c.text }}</span></span>
            </div>
          </div>
          <div class="glabel">Text Formatting<svg class="launch" width="8" height="8"><use href="#launch" /></svg></div>
        </div>
      </section>

      <section class="work">
        <aside class="nav">
          <div class="navhead">
            <span class="navtitle">All Access Objects</span>
            <svg width="13" height="13" viewBox="0 0 13 13"><circle cx="6.500" cy="6.500" r="5.800" fill="#eef0f4" stroke="#7d828c" /><path d="M3.500 5h6L6.500 8.500z" fill="#3e4658" /></svg>
            <i class="hsep" />
            <svg class="coll" width="9" height="8" viewBox="0 0 9 8"><path d="M4 .8L1 4l3 3.200M8 .8L5 4l3 3.200" fill="none" stroke="#3c4454" stroke-width="1.200" /></svg>
          </div>
          <div class="navbody">
            <div class="list">
              <div v-for="e in functions" :key="e.name" class="row" :class="'row-' + e.icon"><svg width="16" height="16"><use :href="'#' + e.icon" /></svg>{{ e.name }}</div>
              <div class="cat">Forms<svg width="9" height="9"><use href="#up2" /></svg></div>
              <div v-for="e in forms" :key="e.name" class="row row-form"><svg width="16" height="16"><use :href="'#' + e.icon" /></svg>{{ e.name }}</div>
              <div class="cat">Reports<svg width="9" height="9"><use href="#up2" /></svg></div>
              <div v-for="e in reports" :key="e.name" class="row" :class="{ active: e.active }"><svg width="16" height="16"><use :href="'#' + e.icon" /></svg>{{ e.name }}</div>
            </div>
            <div class="scroll">
              <span class="sb"><i class="upi" /></span>
              <span class="track" />
              <span class="thumb"><i /></span>
              <span class="sb"><i class="dni" /></span>
            </div>
          </div>
        </aside>

        <article class="doc">
          <div class="doctabs">
            <div class="doctab">
              <svg class="shape" width="130" height="24" viewBox="0 0 130 24"><defs><linearGradient id="gTab" x1="0" y1="0" x2="0" y2="1"><stop offset="0" stop-color="#fde3c2" /><stop offset=".45" stop-color="#fbc98d" /><stop offset=".55" stop-color="#f9b565" /><stop offset="1" stop-color="#fde0b4" /></linearGradient></defs><path d="M.5 24V5Q1 1 5 1.500h105q5 0 9 7l5 9q3 6 6 6.500z" fill="url(#gTab)" stroke="#8a8f99" /></svg>
              <div class="tabtext"><svg width="16" height="16"><use href="#book" /></svg><b>Rpt_Flight_Seats</b></div>
            </div>
            <svg class="docx" width="9" height="9" viewBox="0 0 9 9"><path d="M1 1l7 7M8 1L1 8" stroke="#2e3440" stroke-width="1.500" /></svg>
          </div>
          <div class="page">
            <div class="rhead">
              <span class="rlogo"><svg width="28" height="30"><use href="#logo" /></svg></span>
              <h1>Rpt_Flight_Seats</h1>
              <div class="when"><span>29 October 2013</span><span>16:35:25</span></div>
            </div>
            <div class="colheads"><span>Flight_Number</span><span class="dep">Departure_Date</span></div>
            <div class="fields"><span class="box f1" /><span class="box f2" /></div>
            <div class="seats">
              <span class="seatlabel">Seating Available</span>
              <span class="box total">40</span>
              <span class="btn"><svg width="16" height="16"><use href="#door" /></svg></span>
              <span class="btn print"><span>Print</span><span>Report</span></span>
            </div>
            <div class="pager">Page 1 of 1</div>
          </div>
          <div class="foot" />
        </article>
      </section>

      <footer class="status">
        <span class="stext">Report View</span><i class="ssep" />
        <i class="ssep s2" />
        <span class="vsel"><svg width="14" height="14"><use href="#repv" /></svg></span>
        <svg class="v2" width="14" height="14"><use href="#zoomv" /></svg>
        <svg class="v3" width="13" height="13"><use href="#design" /></svg>
      </footer>
    </main>

    <footer class="dock">
      <svg class="shelf" width="1280" height="57" viewBox="0 0 1280 57"><defs><linearGradient id="gShelf" x1="0" y1="0" x2="0" y2="1"><stop offset="0" stop-color="#77787a" /><stop offset=".5" stop-color="#a5a6a8" /><stop offset="1" stop-color="#d4d5d7" /></linearGradient></defs><path d="M34 26h1214l14 27v4H18v-4z" fill="url(#gShelf)" /><path d="M18 53h1244v1.500H18z" fill="#f7f7f7" /><path d="M18 54.500h1244V57H18z" fill="#9b9c9e" /><path d="M1119 30l8 18" stroke="#77787a" stroke-width="1.500" /></svg>
      <div class="apps">
        <span v-for="(a, i) in dockApps" :key="i" class="app" :class="['app-' + a, { run: running.includes(a) }]">
          <svg width="38" height="38"><use :href="'#' + a" /></svg>
          <small v-if="a === 'calendar'">OCT</small>
          <strong v-if="lettering[a]">{{ lettering[a] }}</strong>
          <em v-if="a === 'mail' || a === 'appstore'">3</em>
        </span>
        <i class="dsep" />
        <span v-for="a in dockRight" :key="a" class="app"><svg width="38" height="38"><use :href="'#' + a" /></svg></span>
      </div>
    </footer>
  </div>
</template>

<style>
body { background: #01040a; overflow: hidden; }
</style>

<style scoped>
* { box-sizing: border-box; }
.desktop { width: 1280px; height: 800px; display: flex; flex-direction: column; overflow: hidden; background: linear-gradient(90deg, #000 0 1270px, #020a12); font-family: "Noto Sans", "Open Sans", sans-serif; font-size: 11px; color: #333; white-space: nowrap; }
.defs { position: absolute; }
svg { display: block; flex: none; }
i { display: block; flex: none; }

.menubar { height: 22px; flex: none; display: flex; align-items: center; background: linear-gradient(#e9e9e9, #a6a6a6); border-bottom: 1px solid #000; color: #080808; font-size: 14px; line-height: 21px; }
.apple { margin-left: 20px; margin-top: -1px; }
.appname { margin-left: 18px; width: 127px; letter-spacing: .25px; }
.menus { display: grid; grid-template-columns: 43px 44px 50px 124px 71px 60px; letter-spacing: .15px; }
.tray { flex: 1; display: flex; align-items: center; margin-left: 267px; }
.temp { width: 46px; margin-left: 5px; display: flex; flex-direction: column; align-items: center; font-size: 9.500px; line-height: 11px; }
.t-fus { margin-left: 10px; }
.pct { width: 20px; margin-left: 12px; font-size: 11px; letter-spacing: -.6px; }
.t-his { margin-left: 13px; }
.t-blu { margin-left: 16px; }
.t-wif { margin-left: 15px; }
.t-vol { margin-left: 10px; }
.clock { margin-left: 14px; width: 70px; letter-spacing: .65px; }
.t-sea { margin-left: 17px; }
.t-not { margin-left: 14px; }

.vm { margin-left: 17px; width: 1255px; height: 721px; flex: none; display: flex; flex-direction: column; border-radius: 5px 5px 0 0; overflow: hidden; }
.machead { height: 55px; flex: none; background: linear-gradient(#e6e6e6, #cdcdcd 50%, #b4b4b4); border-bottom: 1px solid #5a5a5a; }
.macbar { height: 22px; display: flex; align-items: center; padding-left: 8px; }
.light { width: 12px; height: 12px; border-radius: 50%; margin-right: 8px; border: 1px solid #7c4a44; }
.red { background: radial-gradient(circle at 50% 75%, #ff9c92, #e0382f 70%); }
.amber { background: radial-gradient(circle at 50% 75%, #ffe79a, #eba52c 70%); border-color: #94702f; }
.green { background: radial-gradient(circle at 50% 75%, #cdf0a0, #6db046 70%); border-color: #54793c; }
.mactitle { flex: 1; text-align: center; font-size: 13px; letter-spacing: .15px; color: #333; margin-left: -48px; }
.full { margin-right: 4px; }
.macbuttons { display: flex; align-items: center; height: 30px; padding-left: 8px; }
.mbtn { width: 28px; height: 22px; border: 1px solid #868686; border-radius: 4px; background: linear-gradient(#f2f2f2, #d4d4d4); display: flex; align-items: center; justify-content: center; }
.snap { margin-left: 8px; }
.stop { width: 13px; height: 13px; background: #484848; border: 1px solid #333; }
.devices { margin-left: 42px; width: 334px; height: 22px; border: 1px solid #868686; border-radius: 4px; background: linear-gradient(#f2f2f2, #d2d2d2); display: flex; align-items: center; }
.dev { width: 35px; height: 16px; display: flex; justify-content: center; }
.dev-wrench { width: 37px; border-right: 1px solid #b0b0b0; }
.dev-net { margin-left: -1px; }
.dev-share { width: 36px; }
.collapse { flex: 1; height: 16px; border-left: 1px solid #b0b0b0; display: flex; align-items: center; justify-content: center; }
.collapse i { border: 5px solid transparent; border-right-color: #444; border-left: 0; }
.last { margin-left: auto; margin-right: 8px; }

.glass { height: 47px; flex: none; border-bottom: 1px solid #a5acb5; background:
  radial-gradient(ellipse 26px 10px at 268px 15px, #a8444aaa, transparent),
  radial-gradient(ellipse 24px 34px at 132px 26px, #dfe8e0bb, transparent),
  radial-gradient(ellipse 50px 34px at 274px 20px, #e8ecf0bb, transparent),
  radial-gradient(ellipse 34px 34px at 345px 18px, #f0ecf4dd, transparent),
  radial-gradient(ellipse 50px 16px at 195px 12px, #2b2e32aa, transparent),
  radial-gradient(ellipse 180px 24px at 1035px 6px, #0c1116 20%, transparent),
  radial-gradient(ellipse 60px 50px at 1255px 30px, #70767dcc, transparent),
  linear-gradient(90deg, #a0a2a4cc 0, #96989aaa 100px, transparent 180px),
  linear-gradient(#22272d, #6c7176 14%, #8b8f93 24%, #888c90 45%, #c6c8ca 68%, #efefef 95%); }
.titlerow { height: 24px; display: flex; align-items: center; }
.qat { width: 362px; display: flex; align-items: center; padding-left: 1px; margin-top: -1px; }
.bar { width: 1px; height: 12px; background: #4e5256; margin-left: 5px; box-shadow: 1px 0 #b5b8bb; }
.q1 { margin-left: 5px; } .q2 { margin-left: 6px; } .q3 { margin-left: 7px; } .q4 { margin-left: 8px; }
.q5 { margin-left: 6px; } .q6 { margin-left: 8px; } .q7 { margin-left: 5px; } .b2 { margin-left: 6px; }
.custom { margin-left: 5px; width: 8px; height: 8px; border-top: 1px solid #222; position: relative; }
.custom::after { content: ""; position: absolute; left: 0; top: 2px; border: 4px solid transparent; border-top: 4px solid #222; }
.dd { width: 0; height: 0; border: 3px solid transparent; border-top: 3px solid #b3b6bb; border-bottom: 0; margin-left: 5px; }
.dd.dark { border-top-color: #55585c; margin-left: 4px; }
.dd.black { border-top-color: #505050; }
.wintitle { color: #0a0a0a; font-size: 11px; letter-spacing: .13px; margin-top: -2px; text-shadow: 0 0 6px #c0c4c8aa, 0 0 8px #b0b4b8; }
.winctl { margin-left: auto; margin-right: 3px; height: 19px; align-self: flex-start; display: flex; border: 1px solid #d8dadc; border-top: 0; border-radius: 0 0 5px 5px; overflow: hidden; box-shadow: 0 0 1px #222; }
.wc { height: 18px; display: flex; align-items: center; justify-content: center; padding-bottom: 2px; background: linear-gradient(#8f9296, #707479 45%, #35393e 50%, #63676c); border-right: 1px solid #c4c6c9; }
.min { width: 29px; } .max { width: 27px; }
.min i { width: 12px; height: 5px; background: #fff; border: 1px solid #666; margin-top: 6px; }
.close { width: 46px; border: 0; background: linear-gradient(#dfa296, #cf6353 45%, #a9200e 50%, #d15236); }
.tabrow { height: 22px; display: flex; font-size: 11px; line-height: 24px; color: #333; }
.filetab { width: 56px; height: 22px; text-align: center; color: #fff; background: linear-gradient(#c41b59, #a2003f 50%, #c91d5f); border: 1px solid #7d0b38; border-bottom: 0; border-radius: 3px 3px 0 0; line-height: 22px; font-weight: 600; }
.tab { text-align: left; text-shadow: 0 0 5px #fff; }
.tab0 { margin-left: 4px; width: 56px; height: 23px; background: #fff; border: 1px solid #b4bac2; border-bottom: 0; border-radius: 3px 3px 0 0; text-align: center; line-height: 22px; }
.tab1 { margin-left: 15px; width: 61px; } .tab2 { width: 96px; } .tab3 { width: 90px; }
.minrib { margin-left: auto; margin-top: 8px; }
.help { width: 16px; height: 16px; border-radius: 50%; background: radial-gradient(circle at 50% 30%, #7fb0ee, #2a66c8); color: #fff; font-weight: bold; font-size: 12px; line-height: 16px; text-align: center; margin: 3px 3px 0 9px; }

.ribbon { height: 87px; flex: none; display: flex; background: linear-gradient(#fff, #fff 35%, #e9ecf0); border-bottom: 1px solid #868b93; }
.group { height: 86px; border-right: 1px solid #c2c7ce; box-shadow: 1px 0 #fff; position: relative; }
.g-views { width: 50px; } .g-clip { width: 152px; } .g-sort { width: 231px; } .g-rec { width: 190px; } .g-find { width: 117px; } .g-text { width: 352px; }
.gbody { height: 70px; padding-top: 2px; display: flex; }
.glabel { height: 15px; line-height: 15px; text-align: center; color: #62676f; font-size: 11px; }
.g-clip .glabel { padding-right: 19px; } .g-text .glabel { padding-right: 20px; }
.launch { position: absolute; right: 5px; bottom: 4px; }
.big { width: 50px; display: flex; flex-direction: column; align-items: center; color: #222; }
.big.off { color: #97999d; }
.big svg { margin-top: 4px; }
.big span { line-height: 14px; margin-top: 3px; }
.big .dd { margin: 5px 0 0; }
.big .l2 { display: flex; align-items: center; margin-top: -1px; }
.big .l2 .dd { margin: 1px 0 0 3px; }
.g-rec .big { width: 52px; }
.off { color: #97999d; }
.col { display: flex; flex-direction: column; }
.cmd { height: 22px; display: flex; align-items: center; }
.cmd svg { margin-right: 3px; }
.rs, .fp { letter-spacing: -.1px; }
.c2 { margin-left: 6px; } .c3 { margin-left: 5px; }
.c4 .cmd svg { margin-right: 4px; }
.tf { flex-direction: column; padding: 10px 0 0 6px; }
.tfrow { height: 23px; display: flex; align-items: center; }
.second { margin-top: 5px; }
.combo { height: 22px; border: 1px solid #dfe2e6; background: #fafbfc; display: flex; align-items: center; justify-content: flex-end; padding-right: 5px; }
.combo.name { width: 140px; } .combo.size { width: 55px; margin-left: -1px; }
.cell { height: 20px; display: flex; justify-content: center; flex: none; position: relative; }
.tfrow .cell svg { margin: 0 -8px; }
.glyph { position: absolute; left: 0; right: 0; top: 1px; text-align: center; font: bold 14px/18px "Liberation Serif", serif; color: #6f6f6f; }
.cell-italic .glyph { font-weight: normal; font-style: italic; }
.cell-under .glyph { font-size: 13px; line-height: 17px; }
.cell-fontcolor .glyph { font-size: 15px; color: #8a8a8a; }
.cell-highlight .glyph { right: 8px; top: -1px; font: 9px/14px "Liberation Sans", sans-serif; color: #777; }

.work { height: 511px; flex: none; display: flex; background: #9aa1ad; border-top: 3px solid #d5dae0; }
.nav { margin-left: 4px; width: 203px; height: 508px; background: #fff; border-right: 1px solid #8a919d; display: flex; flex-direction: column; }
.navhead { height: 24px; flex: none; padding-top: 3px; display: flex; align-items: center; background: linear-gradient(#fff, #dfe3ea); border-bottom: 1px solid #a0a6b0; padding-left: 6px; }
.navtitle { width: 159px; font-size: 12px; color: #1f3f8f; letter-spacing: .25px; }
.hsep { width: 1px; height: 16px; margin-left: 5px; background: #d0d4da; }
.coll { margin-left: 4px; }
.navbody { flex: 1; display: flex; overflow: hidden; }
.list { width: 185px; height: 484px; overflow: hidden; color: #33343a; }
.row { height: 24px; display: flex; align-items: center; padding-left: 10px; font-size: 11px; }
.row svg { margin-right: 12px; margin-top: -2px; }
.row-form { letter-spacing: -.13px; padding-left: 11px; }
.row-form svg { margin-right: 11px; margin-top: -1px; }
.row-fn { padding-left: 7px; letter-spacing: -.05px; }
.row-fn svg { width: 17px; height: 17px; margin-right: 14px; }
.row:first-child { margin-top: -13px; }
.row.active { background: #e8eaef; }
.cat { height: 19px; margin: 1px 0 -1px; border-top: 1px solid #555; border-bottom: 1px solid #b5bac4; background: linear-gradient(90deg, #d5dbe8, #f1f3f6 50%, #d9deea); color: #153e8e; font-weight: bold; font-size: 12px; line-height: 17px; padding: 2px 12px 0 9px; display: flex; align-items: center; justify-content: space-between; letter-spacing: -.2px; position: relative; }
.scroll { width: 17px; background: #f3f3f4; border-left: 1px solid #e0e0e2; display: flex; flex-direction: column; }
.sb { height: 17px; width: 15px; border: 1px solid #a9acb2; border-radius: 2px; background: linear-gradient(#fff, #e2e4e8); display: flex; align-items: center; justify-content: center; }
.upi { border: 4px solid transparent; border-bottom: 5px solid #3d4a6e; border-top: 0; }
.dni { border: 4px solid transparent; border-top: 5px solid #3d4a6e; border-bottom: 0; }
.track { height: 246px; }
.thumb { height: 203px; width: 15px; border: 1px solid #a0a4ab; border-radius: 2px; background: linear-gradient(90deg, #f6f6f7, #dcdde0); display: flex; align-items: center; justify-content: center; }
.thumb i { width: 8px; height: 7px; background: repeating-linear-gradient(#858585 0 1px, transparent 1px 2px); }

.doc { margin-left: 3px; flex: 1; display: flex; flex-direction: column; border-left: 2px solid #868d98; background: #fff; }
.doctabs { height: 24px; flex: none; display: flex; align-items: center; background: #abb1bd; border-bottom: 1px solid #8d929b; }
.doctab { width: 130px; height: 24px; position: relative; }
.shape { position: absolute; left: -1px; top: 0; }
.tabtext { position: relative; display: flex; align-items: center; height: 24px; padding-left: 6px; color: #000; font-size: 11px; letter-spacing: -.25px; }
.tabtext svg { margin-top: -1px; }
.tabtext b { margin-left: 8px; }
.docx { margin-left: auto; margin-right: 8px; }
.page { height: 467px; flex: none; padding: 23px 0 0 24px; font-family: Lato, "Noto Sans", sans-serif; color: #111; font-size: 13.500px; }
.rhead { width: 745px; height: 51px; background: #c6d8f0; display: flex; color: #1f497d; }
.rlogo { width: 46px; height: 42px; margin: 6px 0 0 19px; border-top: 1px solid #a9adb4; border-bottom: 1px solid #a9adb4; background: linear-gradient(90deg, #fafafa, #e6e6e6); display: flex; align-items: center; justify-content: center; }
h1 { margin: 6px 0 0 5px; font: normal 23px/28px "Liberation Serif", serif; letter-spacing: .53px; }
.when { margin-left: auto; padding-right: 24px; display: flex; flex-direction: column; align-items: flex-end; line-height: 25px; padding-top: 2px; font-size: 13.500px; letter-spacing: -.33px; }
.colheads { width: 343px; height: 31px; margin-left: 1px; border-bottom: 1px solid #999; color: #7f7f7f; display: flex; padding: 4px 0 0 6px; line-height: 21px; letter-spacing: .38px; }
.colheads span:first-child { width: 232px; }
.dep { letter-spacing: .18px; }
.box { height: 26px; border: 1px solid #ddd8c4; background: #fff; }
.fields { display: flex; padding: 1px 0 0 3px; gap: 3px; }
.f1 { width: 230px; } .f2 { width: 106px; }
.seats { display: flex; padding: 10px 0 0 4px; height: 89px; }
.seatlabel { width: 207px; line-height: 20px; padding-top: 13px; color: #000; letter-spacing: .43px; }
.total { width: 123px; margin-top: 14px; text-align: right; padding-right: 5px; line-height: 22px; letter-spacing: -.2px; }
.btn { width: 78px; height: 78px; margin-left: 32px; background: #f0f0f0; border: 1px solid #e4e4e4; border-right: 2px solid #6a6a6a; border-bottom: 2px solid #6a6a6a; display: flex; align-items: center; justify-content: center; }
.btn svg { margin-left: -1px; margin-top: -1px; }
.print { width: 77px; margin-left: 1px; flex-direction: column; line-height: 18px; letter-spacing: .3px; padding-bottom: 2px; border-left: 2px solid #fff; }
.print span:first-child { margin-left: -4px; }
.pager { padding: 24px 0 0 338px; line-height: 20px; }
.foot { flex: 1; background: #f5f5f5; }

.status { height: 22px; flex: none; display: flex; align-items: center; background: linear-gradient(#e3e6e9, #bec2c7); border-top: 1px solid #8b919a; padding-left: 8px; color: #3f444a; }
.stext { width: 618px; letter-spacing: .1px; margin-top: -2px; }
.ssep { width: 1px; height: 18px; background: #8d9299; box-shadow: 1px 0 #f4f4f4; }
.s2 { margin-left: 565px; }
.vsel { margin-left: 4px; width: 19px; height: 19px; border: 1px solid #c28a2a; border-radius: 2px; background: linear-gradient(#fff0b0, #ffd768); display: flex; align-items: center; justify-content: center; }
.v2 { margin-left: 2px; } .v3 { margin-left: 6px; }

.dock { height: 57px; flex: none; position: relative; overflow: hidden; background: linear-gradient(#000 0 1px, #a5b8d0 1px 2px, #000 2px); }
.shelf { position: absolute; left: 0; top: 0; }
.apps { position: relative; display: flex; padding: 9px 0 0 35.700px; }
.app { width: 38.560px; height: 48px; position: relative; flex: none; }
.app strong, .app small { position: absolute; display: block; }
.app-contacts strong { left: 11px; top: 8px; font: 16px/18px Lato, sans-serif; color: #f5e8cc; }
.app-calendar small { left: 5px; top: 9px; font: bold 5px/6px "Liberation Sans", sans-serif; color: #fff; }
.app-calendar strong { left: 11px; top: 18px; font: bold 15px/16px "Liberation Sans", sans-serif; color: #222; transform: rotate(-5deg); }
.app-skype strong { left: 10px; top: 4px; font: 900 28px/30px Lato, sans-serif; color: #fff; }
.app-pcsx strong { left: 5px; top: 23px; font: bold 10px/12px Lato, sans-serif; color: #fff; transform: rotate(-6deg); }
.app em { position: absolute; right: 1px; top: -1px; width: 12px; height: 12px; border-radius: 50%; background: #d9242a; border: 1px solid #f5c6c6; color: #fff; font: bold 8px/10px "Liberation Sans", sans-serif; text-align: center; }
.run::after { content: ""; position: absolute; left: 13px; top: 44px; width: 12px; height: 4px; border-radius: 50%; background: #eaf7ff; box-shadow: 0 0 5px 3px #9fd6f5aa; }
.dsep { width: 18.500px; }
</style>
